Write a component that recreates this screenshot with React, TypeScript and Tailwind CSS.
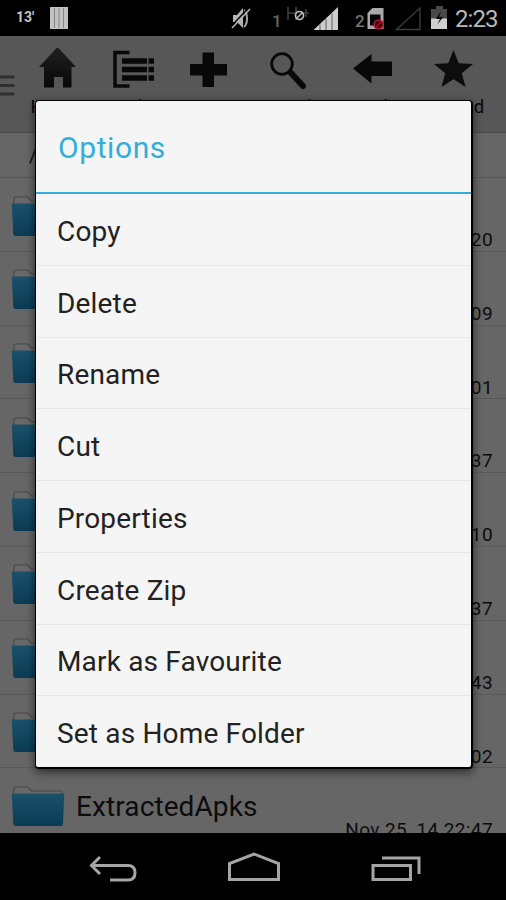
import type { ReactNode } from "react";

const FILES = [
  "Nov 25, 14 22:20",
  "Nov 25, 14 22:09",
  "Nov 25, 14 22:01",
  "Nov 25, 14 22:37",
  "Nov 25, 14 22:10",
  "Nov 25, 14 22:37",
  "Nov 25, 14 22:43",
  "Nov 25, 14 22:02",
];

const OPTIONS = [
  "Copy",
  "Delete",
  "Rename",
  "Cut",
  "Properties",
  "Create Zip",
  "Mark as Favourite",
  "Set as Home Folder",
];

function StatusBar() {
  return (
    <div className="flex h-[35.5px] shrink-0 items-center bg-black text-[#c4c4c4]">
      <span className="ml-4 w-[22px] text-[14px] font-bold">13'</span>
      <svg className="ml-3 h-[22px] w-[18px]" viewBox="0 0 18 22">
        <path d="M0 0h18v22H0z" fill="#c2c2c2" />
        <path d="M4.5 1v20M9 1v20M13.5 1v20" stroke="#858585" strokeWidth="1" />
      </svg>
      {/* everything right of the battery widget */}
      <svg className="ml-[162px] h-[36px] w-[218px]" viewBox="230 0 218 36">
        <path d="M233 15h4l6-7v20l-6-6h-4z" fill="#b5b5b5" />
        <path d="M244 10c4 3 4 14 0 17" fill="none" stroke="#a5a5a5" strokeWidth="2" />
        <path d="M231 26.500 247.500 9" stroke="#000" strokeWidth="1.500" />
        <path d="M232 28 250 9" stroke="#b5b5b5" strokeWidth="1.6" />
        <text x="272" y="26.5" fill="#666" fontSize="17" fontWeight="500">1</text>
        <path d="M288 7v13M296 7v13M288 13h8M300 13h9M306 9v8" stroke="#3c3c3c" strokeWidth="1.7" />
        <circle cx="299.5" cy="15.5" r="4" fill="#000" stroke="#bdbdbd" strokeWidth="1.7" />
        <path d="m297 18 5-5" stroke="#bdbdbd" strokeWidth="1.5" />
        <path d="M313.500 30 338 7v23z" fill="#cecece" />
        <path d="M320 24.500v5.500M326 19v11M332 13.500v16.500" stroke="#777" strokeWidth="1.3" />
        <text x="355" y="26.5" fill="#777" fontSize="17" fontWeight="500">2</text>
        <path d="M367.500 13l5-5h11v21h-16z" fill="#aaa" />
        <path d="M370 14.500h10.500v11H370z" fill="#050505" />
        <circle cx="378.500" cy="24.500" r="4.300" fill="#200" stroke="#b3122d" strokeWidth="1.800" />
        <path d="m375.500 27.500 6-6" stroke="#b3122d" strokeWidth="1.600" />
        <path d="M396.500 29.500 420 8v21.500z" fill="none" stroke="#3b3b3b" strokeWidth="1.400" />
        <path d="M436 6h7v3h4v10h-16V9h5z" fill="#484848" />
        <path d="M431 18.500h16V29h-16z" fill="#cfcfcf" />
        <path d="m441 11-5 8h4l-3 6 6-8h-4z" fill="#000" />
      </svg>
      <span className="ml-[7px] mt-0.5 text-[24px] tracking-[-0.9px] text-[#b9b9b9]">2:23</span>
    </div>
  );
}

function ToolItem({ label, width, children }: { label: string; width: string; children: ReactNode }) {
  return (
    <div className={`flex shrink-0 flex-col items-center text-[#080808] ${width}`}>
      <svg className="mt-3 h-11 w-11" viewBox="0 0 44 44">
        {children}
      </svg>
      <span className="mt-1 text-[18.5px] leading-[22px] tracking-[0.5px]">{label}</span>
    </div>
  );
}

function Toolbar() {
  return (
    <div className="flex h-[97.5px] shrink-0 border-b border-[#4b4b4b] bg-[#575757]">
      <svg className="mt-[38px] h-6 w-[17px] shrink-0" viewBox="0 0 17 24">
        <path d="M0 3h14.500M0 11.500h14.500M0 20h14.500" stroke="#303030" strokeWidth="3" />
      </svg>
      <div className="flex">
        <ToolItem label="Home" width="w-[79px]">
          <defs>
            <linearGradient id="ink" x1="0" x2="0" y1="0" y2="1">
              <stop offset="0" stopColor="#202020" />
              <stop offset="1" stopColor="#080808" />
            </linearGradient>
          </defs>
          <path d="M22.500-1 41 19h-4.500v20.500h-8.500V29h-9v10.500h-10V19H4z" fill="url(#ink)" />
        </ToolItem>
        <ToolItem label="Multi" width="w-[72px]">
          <path d="M19.500 4.500H5v33.500h14.500" fill="none" stroke="#080808" strokeWidth="3.500" />
          <path d="M12 13h25M12 21.500h25M12 30h25" stroke="#080808" strokeWidth="5.500" />
          <path d="M38.500 13h5.500M38.500 21.500h5.500M38.500 30h5.500" stroke="#080808" strokeWidth="5.500" />
        </ToolItem>
        <ToolItem label="New" width="w-[79px]">
          <path d="M16.500 4.500H28v11.500h13v11.500H28V39H16.500V27.500H4V16h12.500z" fill="#080808" />
        </ToolItem>
        <ToolItem label="Search" width="w-[82px]">
          <circle cx="16" cy="16" r="10.300" fill="none" stroke="#080808" strokeWidth="2.800" />
          <path d="m25 25 12 13" stroke="#080808" strokeWidth="6" strokeLinecap="round" />
        </ToolItem>
        <ToolItem label="Back" width="w-[86px]">
          <path d="M3 20.500 21.500 6v7.500H42V28H21.500v7.500z" fill="#080808" />
        </ToolItem>
        <ToolItem label="Starred" width="w-[76px]">
          <path d="m22.500 2 5.200 13.300 14.300.8-11.200 9.200 3.800 13.700-12.100-7.700-12 7.700 3.700-13.700L3 16.100l14.200-.8z" fill="#0d0d0d" />
        </ToolItem>
      </div>
    </div>
  );
}

function Folder() {
  return (
    <svg className="h-11 w-[54px] shrink-0" viewBox="0 0 54 44">
      <defs>
        <linearGradient id="folder" x1="0" x2="0" y1="0" y2="1">
          <stop offset="0" stopColor="#1a516b" />
          <stop offset="1" stopColor="#0b3b54" />
        </linearGradient>
      </defs>
      <path d="M3 12V3.500Q3 2 5 2h11.500l4 4H49q2 0 2 2v4" fill="#696969" stroke="#484848" strokeWidth="1.200" />
      <path d="M1 8.500h51.500q.8 0 .7 1L52 39q-.2 2-2 2H4.500q-2 0-2.200-2L.8 9.500q0-1 .2-1z" fill="url(#folder)" />
    </svg>
  );
}

function FileRow({ name, date }: { name?: string; date: string }) {
  return (
    <div className="flex h-[73.8px] shrink-0 border-b border-[#595959] pl-[11px] pr-[13px]">
      <div className="pt-[16.5px]">
        <Folder />
      </div>
      <span className="ml-[11px] mt-[22.5px] w-[190px] text-[28px] leading-8 tracking-[0.1px] text-[#0c0c0c]">{name}</span>
      <span className="ml-auto mt-[51px] whitespace-nowrap text-[19px] leading-[22px] tracking-[0.4px] text-[#0c0c0c]">
        {date}
      </span>
    </div>
  );
}

function NavBar() {
  return (
    <div className="flex h-[67px] shrink-0 justify-center bg-black">
      <svg className="h-[67px] w-[506px]" viewBox="0 833 506 67" fill="none" stroke="#a5a5a5" strokeWidth="3">
        <path d="M100 857 91.500 865.500 100 874M92 865.500h36q7 0 7 7.200t-7 7.300h-18" />
        <path d="M229.500 879.500v-16l24.500-9.500 24.500 9.500v16z" />
        <path d="M373 865.500h37.500v14H373z" />
        <path d="M382 858h37v16" />
      </svg>
    </div>
  );
}

function OptionsDialog() {
  return (
    <div className="absolute left-[35px] top-[100px] w-[438px] overflow-hidden rounded-[4px] border-2 border-l-1 border-t-1 border-black bg-[#f5f5f5] shadow-[0_3px_10px_rgba(0,0,0,0.6)]">
      <h1 className="flex h-[93px] items-center border-b-[2.5px] border-[#33addb] pl-[22px] pt-0.5 text-[30px] font-normal tracking-[0.6px] text-[#33addb]">
        Options
      </h1>
      <ul>
        {OPTIONS.map((option) => (
          <li
            key={option}
            className="flex h-[71.75px] items-center border-b-[1.5px] border-[#e7e7e7] pl-[21px] pt-[5px] text-[28px] tracking-[0.17px] text-[#222] last:h-[71px] last:border-b-0"
          >
            {option}
          </li>
        ))}
      </ul>
    </div>
  );
}

export default function App() {
  return (
    <div className="relative flex h-[900px] w-[506px] flex-col overflow-hidden bg-black font-[Roboto,sans-serif]">
      <StatusBar />
      <div className="flex min-h-0 flex-1 flex-col overflow-hidden bg-[#666]">
        <Toolbar />
        <div className="h-[45px] shrink-0 border-b border-[#575757] pl-[29px] pt-[11px] text-[19px] leading-6 text-[#0c0c0c]">
          /storage/emulated/0
        </div>
        {FILES.map((date, i) => (
          <FileRow key={i} date={date} />
        ))}
        <FileRow name="ExtractedApks" date="Nov 25, 14 22:47" />
      </div>
      <NavBar />
      <OptionsDialog />
    </div>
  );
}
